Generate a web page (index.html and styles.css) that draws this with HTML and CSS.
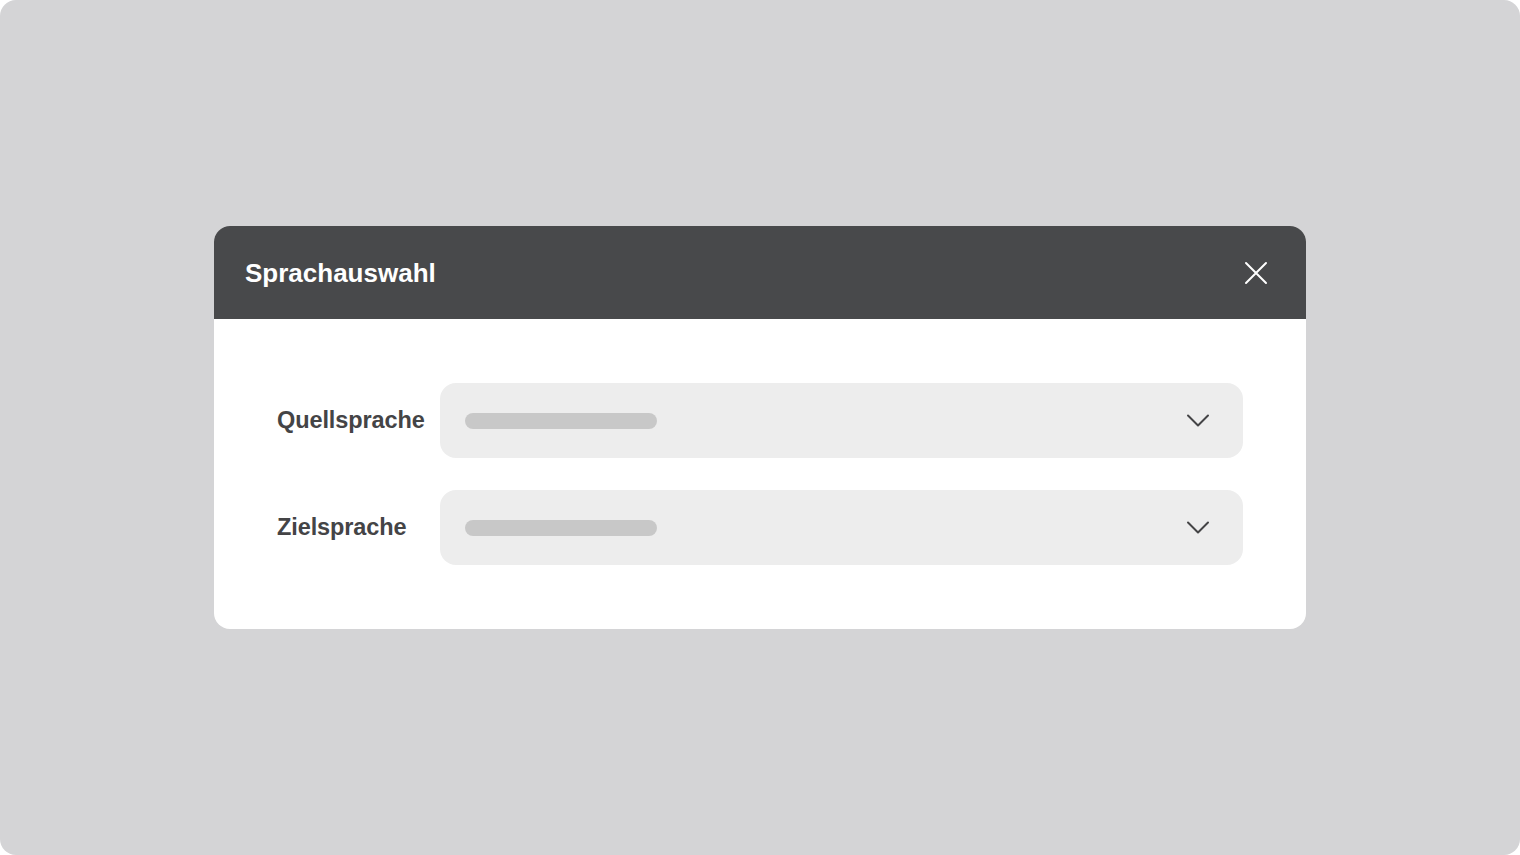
FILE: index.html
```html
<!DOCTYPE html>
<html lang="de">
<head>
<meta charset="utf-8">
<title>Sprachauswahl</title>
<link rel="stylesheet" href="styles.css">
</head>
<body>
<div class="stage">
  <div class="dialog">
    <div class="dialog-header">
      <h1 class="dialog-title">Sprachauswahl</h1>
      <button class="close-btn" aria-label="Schließen">
        <svg width="24" height="24" viewBox="0 0 24 24" fill="none" stroke="#ffffff" stroke-width="2" stroke-linecap="round"><path d="M2 2 L22 22 M22 2 L2 22"/></svg>
      </button>
    </div>
    <div class="dialog-body">
      <label class="field-label">Quellsprache</label>
      <div class="select">
        <span class="placeholder"></span>
        <svg class="chevron" width="24" height="14" viewBox="0 0 24 14" fill="none" stroke="#444446" stroke-width="2" stroke-linecap="round" stroke-linejoin="round"><path d="M2 1.5 L12 11.5 L22 1.5"/></svg>
      </div>
      <label class="field-label">Zielsprache</label>
      <div class="select">
        <span class="placeholder"></span>
        <svg class="chevron" width="24" height="14" viewBox="0 0 24 14" fill="none" stroke="#444446" stroke-width="2" stroke-linecap="round" stroke-linejoin="round"><path d="M2 1.5 L12 11.5 L22 1.5"/></svg>
      </div>
    </div>
  </div>
</div>
</body>
</html>
```
FILE: styles.css
```css
* { box-sizing: border-box; }
html, body { margin: 0; padding: 0; background: #ffffff; }
body {
  width: 1520px;
  height: 855px;
  font-family: "Liberation Sans", Arial, Helvetica, sans-serif;
}
.stage {
  width: 1520px;
  height: 855px;
  background: #d4d4d6;
  border-radius: 16px;
  display: flex;
  align-items: center;
  justify-content: center;
}
.dialog {
  width: 1092px;
  background: #ffffff;
  border-radius: 16px;
  overflow: hidden;
}
.dialog-header {
  height: 93px;
  background: #48494b;
  display: flex;
  align-items: center;
  justify-content: space-between;
  padding: 0 38px 0 31px;
}
.dialog-title {
  margin: 0;
  color: #ffffff;
  font-size: 26px;
  font-weight: 700;
  letter-spacing: 0;
  line-height: 1;
}
.close-btn {
  background: none;
  border: 0;
  padding: 0;
  width: 24px;
  height: 24px;
  display: flex;
}
.dialog-body {
  padding: 64px 63px;
  display: grid;
  grid-template-columns: 163px 1fr;
  row-gap: 32px;
  align-items: center;
}
.field-label {
  color: #444446;
  font-size: 23.5px;
  font-weight: 700;
  letter-spacing: -0.1px;
}
.select {
  height: 75px;
  background: #ededed;
  border-radius: 16px;
  display: flex;
  align-items: center;
  justify-content: space-between;
  padding: 0 33px 0 25px;
}
.placeholder {
  display: block;
  width: 192px;
  height: 16px;
  border-radius: 8px;
  background: #c8c8c8;
}
.chevron { display: block; margin-top: 1px; }
```
